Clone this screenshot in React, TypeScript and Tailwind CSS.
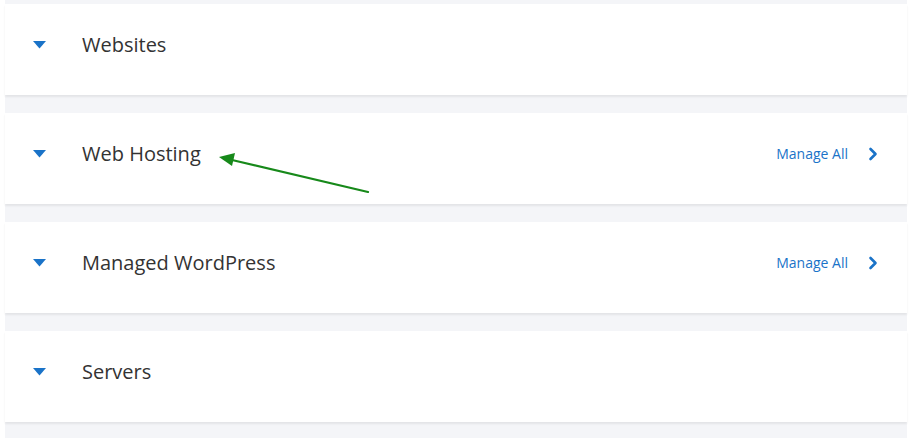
const rows = [
  { title: 'Websites', manage: false },
  { title: 'Web Hosting', manage: true },
  { title: 'Managed WordPress', manage: true },
  { title: 'Servers', manage: false },
];

function Caret() {
  return (
    <svg width="13" height="8" viewBox="0 0 13 8" className="shrink-0">
      <path d="M0 0 H13 L6.5 7.5 Z" fill="#1a73c8" />
    </svg>
  );
}

function Chevron() {
  return (
    <svg width="10" height="14" viewBox="0 0 10 14" className="shrink-0">
      <path d="M2.5 2 L7.5 7 L2.5 12" fill="none" stroke="#1a73c8" strokeWidth="2.6" strokeLinecap="round" strokeLinejoin="round" />
    </svg>
  );
}

export default function App() {
  return (
    <div className="relative w-[912px] h-[438px] bg-white overflow-hidden" style={{ fontFamily: '"Open Sans", "Noto Sans", sans-serif' }}>
      <div className="mx-[5px] pt-[4px] bg-[#f4f5f8] flex flex-col gap-[18px] pb-[20px]">
        {rows.map(r => (
          <div
            key={r.title}
            className="h-[91px] bg-white flex items-center pb-[10px] pl-[28px] pr-[29px] shadow-[0_2px_2px_rgba(0,0,0,0.07)]"
          >
            <Caret />
            <span className="ml-[36px] text-[20px] text-[#333333]">{r.title}</span>
            {r.manage && (
              <div className="ml-auto flex items-center">
                <span className="text-[14px] text-[#1a73c8]">Manage All</span>
                <span className="ml-[20px] mt-[1px]"><Chevron /></span>
              </div>
            )}
          </div>
        ))}
      </div>

      {/* annotation arrow */}
      <svg className="absolute left-0 top-0 pointer-events-none" width="912" height="438">
        <line x1="368" y1="192" x2="232" y2="160" stroke="#17891a" strokeWidth="2.2" strokeLinecap="round" />
        <path d="M219 157 L235 153 L232 166 Z" fill="#17891a" />
      </svg>
    </div>
  );
}
